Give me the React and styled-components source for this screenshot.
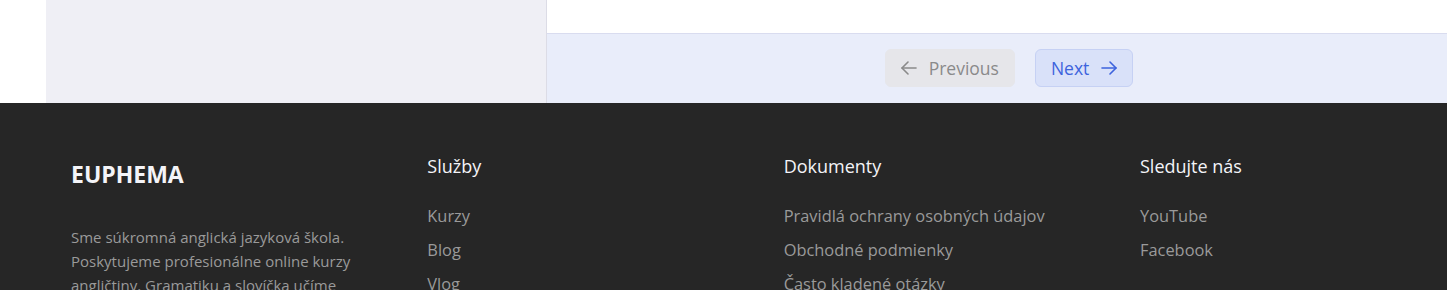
import React from "react";
import styled, { createGlobalStyle } from "styled-components";

const GlobalStyle = createGlobalStyle`
  body {
    margin: 0;
    font-family: "Open Sans", "Noto Sans", sans-serif;
    background: #ffffff;
  }
`;

const Page = styled.div`
  width: 1447px;
  height: 290px;
  overflow: hidden;
`;

const Top = styled.div`
  display: grid;
  grid-template-columns: 46px 501px 1fr;
  height: 103px;
`;

const Sidebar = styled.div`
  background: #efeff5;
  border-right: 1px solid #dcdce6;
`;

const Content = styled.div`
  display: flex;
  flex-direction: column;
  background: #ffffff;
`;

const Pagination = styled.div`
  margin-top: auto;
  height: 70px;
  box-sizing: border-box;
  border-top: 1px solid #d9dcef;
  background: #e9edfa;
  display: flex;
  align-items: center;
  justify-content: center;
  gap: 20px;
  padding-left: 24px;
  padding-bottom: 1px;
`;

const PageButton = styled.button`
  display: flex;
  align-items: center;
  gap: 12px;
  height: 38px;
  box-sizing: border-box;
  padding: 0 15px;
  border-radius: 6px;
  font-family: inherit;
  font-size: 17.5px;
  border: 1px solid ${(p) => (p.$active ? "#c6d1f4" : "#e6e6ea")};
  background: ${(p) => (p.$active ? "#d9e1f9" : "#e6e6ea")};
  color: ${(p) => (p.$active ? "#3d63dd" : "#8a8a8a")};
  cursor: pointer;
`;

const Footer = styled.footer`
  background: #262626;
  height: 187px;
  display: grid;
  grid-template-columns: repeat(4, 300px);
  column-gap: 56.33px;
  padding: 0 0 0 71px;
  box-sizing: border-box;
`;

const Column = styled.div`
  display: flex;
  flex-direction: column;
  padding-top: 51px;
`;

const Brand = styled.div`
  color: #f4f4f8;
  font-size: 23px;
  font-weight: 700;
  line-height: 32px;
  margin-top: 4px;
`;

const About = styled.p`
  margin: 35px 0 0;
  max-width: 290px;
  color: #9a9a9a;
  font-size: 15px;
  line-height: 24px;
`;

const Heading = styled.div`
  color: #f4f4f8;
  font-size: 18px;
  line-height: 24px;
  margin-bottom: 21px;
`;

const FooterLink = styled.a`
  color: #9a9a9a;
  font-size: 16.4px;
  line-height: 34px;
  text-decoration: none;
  white-space: nowrap;
`;

const Arrow = ({ dir }) => (
  <svg width="16" height="16" viewBox="4 4 16 16" fill="none" stroke="currentColor" strokeWidth="1.6" strokeLinecap="round" strokeLinejoin="round">
    {dir === "left" ? (
      <>
        <path d="M19 12H5" />
        <path d="M11 18l-6-6 6-6" />
      </>
    ) : (
      <>
        <path d="M5 12h14" />
        <path d="M13 6l6 6-6 6" />
      </>
    )}
  </svg>
);

const columns = [
  { title: "Služby", links: ["Kurzy", "Blog", "Vlog"] },
  {
    title: "Dokumenty",
    links: ["Pravidlá ochrany osobných údajov", "Obchodné podmienky", "Často kladené otázky"],
  },
  { title: "Sledujte nás", links: ["YouTube", "Facebook"] },
];

export default function App() {
  return (
    <Page>
      <GlobalStyle />
      <Top>
        <div />
        <Sidebar />
        <Content>
          <Pagination>
            <PageButton>
              <Arrow dir="left" />
              Previous
            </PageButton>
            <PageButton $active>
              Next
              <Arrow dir="right" />
            </PageButton>
          </Pagination>
        </Content>
      </Top>
      <Footer>
        <Column>
          <Brand>EUPHEMA</Brand>
          <About>
            Sme súkromná anglická jazyková škola. Poskytujeme profesionálne online kurzy
            angličtiny. Gramatiku a slovíčka učíme zrozumiteľne.
          </About>
        </Column>
        {columns.map(({ title, links }) => (
          <Column key={title}>
            <Heading>{title}</Heading>
            {links.map((l) => (
              <FooterLink key={l} href="#">
                {l}
              </FooterLink>
            ))}
          </Column>
        ))}
      </Footer>
    </Page>
  );
}
